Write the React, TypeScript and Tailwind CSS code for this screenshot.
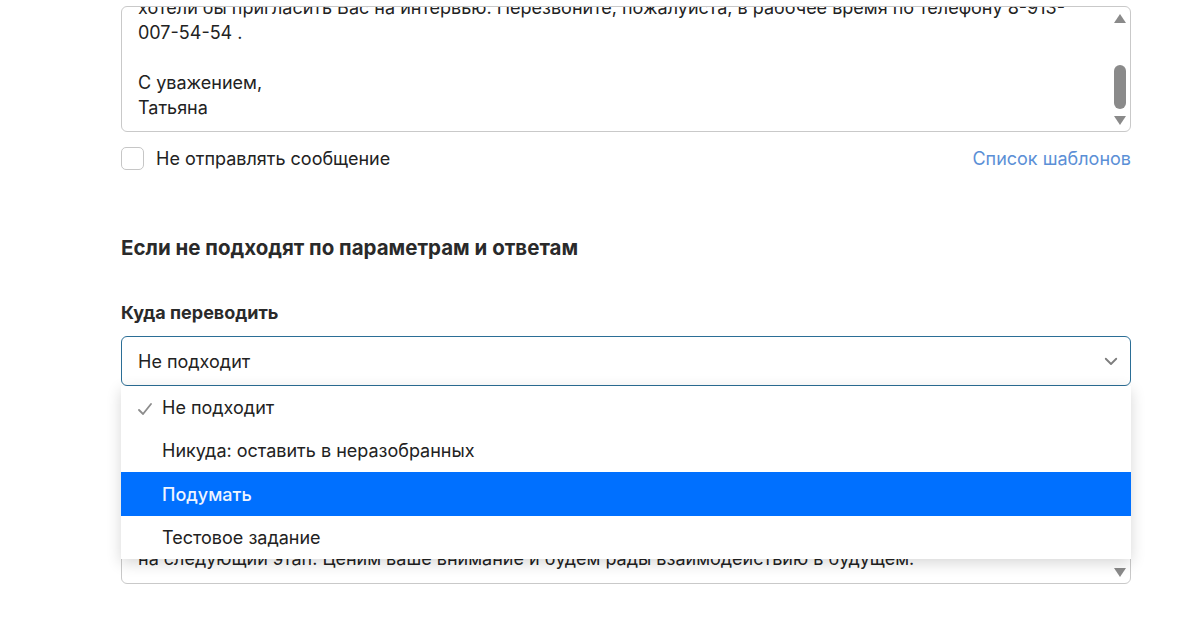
import React from 'react';

const font = { fontFamily: 'Inter, "Noto Sans", sans-serif' };

const ScrollBar: React.FC<{ thumb?: boolean }> = ({ thumb = true }) => (
  <>
    <svg className="absolute right-[4px] top-[7px]" width="12" height="9" viewBox="0 0 12 9">
      <path d="M6 0 L12 9 L0 9 Z" fill="#8a8a8a" />
    </svg>
    {thumb && <div className="absolute right-[4px] top-[58px] w-[12px] h-[44px] rounded-full bg-[#8a8a8a]" />}
    <svg className="absolute right-[4px] bottom-[6px]" width="12" height="9" viewBox="0 0 12 9">
      <path d="M0 0 L12 0 L6 9 Z" fill="#8a8a8a" />
    </svg>
  </>
);

const options = [
  'Не подходит',
  'Никуда: оставить в неразобранных',
  'Подумать',
  'Тестовое задание',
];

export default function App() {
  return (
    <div className="w-[1196px] h-[629px] bg-white overflow-hidden text-[#222]" style={font}>
      <div className="ml-[121px] w-[1010px] pt-[6px]">
        {/* Message textarea */}
        <div className="relative h-[126px] border border-[#c9c9c9] rounded-[6px] overflow-hidden">
          <div className="pl-[16px] pr-[40px] text-[18px] leading-[25px] -mt-[12px]">
            <p>хотели бы пригласить Вас на интервью. Перезвоните, пожалуйста, в рабочее время по телефону 8-913-</p>
            <p>007-54-54 .</p>
            <p>&nbsp;</p>
            <p>С уважением,</p>
            <p>Татьяна</p>
          </div>
          <ScrollBar />
        </div>

        <div className="flex items-center justify-between mt-[13px]">
          <label className="flex items-center gap-[12px] text-[18px]">
            <span className="w-[23px] h-[23px] rounded-[5px] border border-[#c6c6c6] bg-white" />
            Не отправлять сообщение
          </label>
          <a className="text-[18px] text-[#5b8fd6]">Список шаблонов</a>
        </div>

        <h2 className="mt-[62px] text-[20.5px] leading-[28px] font-bold text-[#2a2a2a]">Если не подходят по параметрам и ответам</h2>

        <div className="mt-[39px] text-[18px] leading-[24px] font-bold text-[#2a2a2a]">Куда переводить</div>

        <div className="relative mt-[11px]">
          <div className="h-[50px] border border-[#2b6e96] rounded-[6px] flex items-center justify-between pl-[16px] pr-[10px] text-[18px]">
            <span>Не подходит</span>
            <svg width="18" height="18" viewBox="0 0 24 24" fill="none" stroke="#7d7d7d" strokeWidth="2.4" strokeLinecap="round" strokeLinejoin="round">
              <path d="M5 9 L12 16 L19 9" />
            </svg>
          </div>

          {/* Textarea beneath the open menu */}
          <div className="relative mt-[84px] h-[114px] border border-[#c9c9c9] rounded-[6px] overflow-hidden">
            <div className="absolute left-[16px] bottom-[12px] text-[18px] leading-[25px] whitespace-nowrap">
              на следующий этап. Ценим ваше внимание и будем рады взаимодействию в будущем.
            </div>
            <ScrollBar thumb={false} />
          </div>

          {/* Open dropdown */}
          <ul className="absolute left-0 right-0 top-[50px] bg-white shadow-[0_4px_14px_rgba(0,0,0,0.16)] text-[18px] text-[#222]">
            {options.map((o, i) => (
              <li
                key={o}
                className={
                  i === 2
                    ? 'h-[44px] flex items-center pl-[41px] bg-[#0070ff] text-[#eef4ff] font-medium'
                    : 'h-[43px] flex items-center pl-[41px] relative'
                }
              >
                {i === 0 && (
                  <svg className="absolute left-[17px] top-[17px]" width="14" height="12" viewBox="0 0 14 12" fill="none" stroke="#8c8c8c" strokeWidth="1.8" strokeLinecap="round">
                    <path d="M1 7 L5 11 L13 1" />
                  </svg>
                )}
                {o}
              </li>
            ))}
          </ul>
        </div>
      </div>
    </div>
  );
}
